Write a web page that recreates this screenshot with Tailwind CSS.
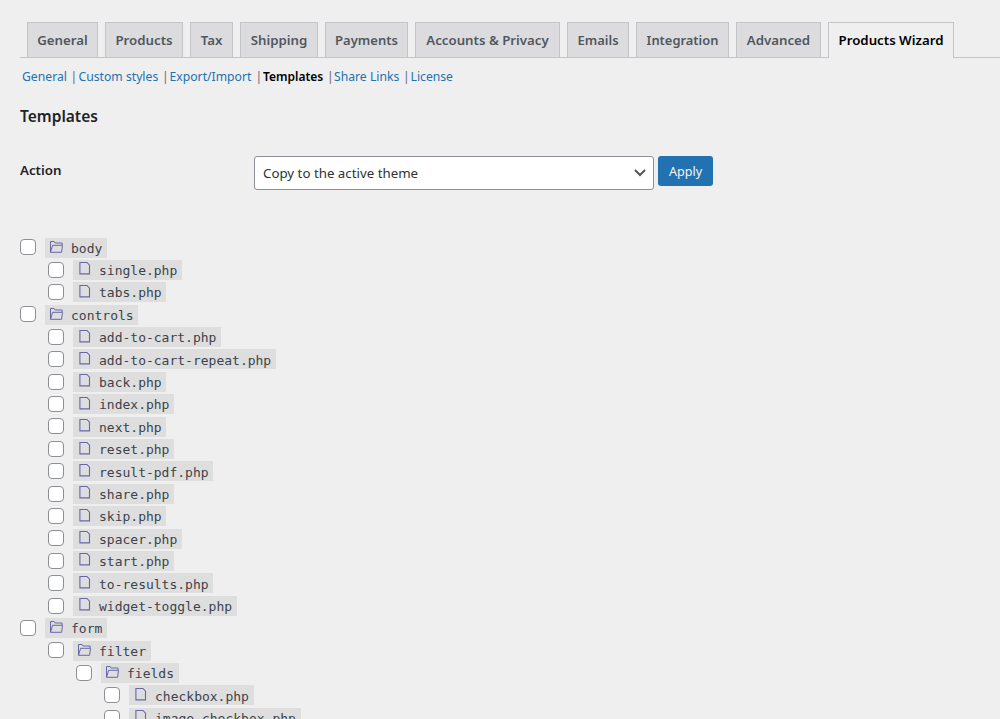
<!DOCTYPE html>
<html lang="en">
<head>
<meta charset="utf-8">
<title>Products Wizard – Templates</title>
<script src="https://cdn.jsdelivr.net/npm/@tailwindcss/browser@4"></script>
</head>
<body class="h-[719px] overflow-hidden bg-[#efefef] font-['Noto_Sans',sans-serif] text-[13px] text-[#3c434a]">
<svg class="hidden">
  <symbol id="folder" viewBox="0 0 14 13"><path d="M1.500 12.300V1.500h3.600l1 1.500h7v2M1.500 12.300 3.600 5.300h9.900L12.600 12.300Z" fill="none" stroke="#6767a8" stroke-width="1"/></symbol>
  <symbol id="file" viewBox="0 0 12 14"><path d="M.9 1.500h7.100l2.500 2.700v8.700H.9Z" fill="none" stroke="#6767a8" stroke-width="1.100"/></symbol>
</svg>
<nav class="mt-[22px] ml-5 flex h-9 gap-[7px] border-b border-[#c3c4c7] pl-[7px] text-[13.25px] leading-[35px] font-semibold whitespace-nowrap text-[#50575e]">
  <a class="h-[35px] w-[71px] border border-b-0 border-[#c3c4c7] bg-[#dcdcde] text-center">General</a>
  <a class="h-[35px] w-[78px] border border-b-0 border-[#c3c4c7] bg-[#dcdcde] text-center">Products</a>
  <a class="h-[35px] w-[43px] border border-b-0 border-[#c3c4c7] bg-[#dcdcde] text-center">Tax</a>
  <a class="h-[35px] w-[78px] border border-b-0 border-[#c3c4c7] bg-[#dcdcde] text-center">Shipping</a>
  <a class="h-[35px] w-[83px] border border-b-0 border-[#c3c4c7] bg-[#dcdcde] text-center text-[13px]">Payments</a>
  <a class="h-[35px] w-[145px] border border-b-0 border-[#c3c4c7] bg-[#dcdcde] text-center">Accounts &amp; Privacy</a>
  <a class="h-[35px] w-[62px] border border-b-0 border-[#c3c4c7] bg-[#dcdcde] text-center text-[13px]">Emails</a>
  <a class="h-[35px] w-[93px] border border-b-0 border-[#c3c4c7] bg-[#dcdcde] text-center text-[12.9px]">Integration</a>
  <a class="h-[35px] w-[85px] border border-b-0 border-[#c3c4c7] bg-[#dcdcde] text-center">Advanced</a>
  <a class="h-9 w-[126px] border border-b-0 border-[#c3c4c7] bg-[#efefef] text-center text-black">Products Wizard</a>
</nav>
<div class="ml-[22px] flex h-9 items-center pt-[2px] text-[12.2px] whitespace-nowrap text-[#2271b1]">
  <a class="w-[48.500px]">General</a><span class="w-[8px] text-[#646970]">|</span>
  <a class="w-[83.500px]">Custom styles</a><span class="w-[7.5px] text-[#646970]">|</span>
  <a class="w-[86px]">Export/Import</a><span class="w-[7.5px] text-[#646970]">|</span>
  <a class="w-[64px] text-[12px] font-semibold text-black">Templates</a><span class="w-[7px] text-[#646970]">|</span>
  <a class="w-[69px]">Share Links</a><span class="w-[7.5px] text-[#646970]">|</span>
  <a>License</a>
</div>
<h2 class="mt-[10px] ml-5 h-6 text-[15.5px] leading-6 font-semibold text-[#1d2327]">Templates</h2>
<div class="mt-7 ml-5 flex h-[34px] items-start">
  <div class="w-[234px] pt-[4px] text-[13.3px] leading-5 font-semibold text-[#1d2327]">Action</div>
  <div class="flex h-[34px] w-[400px] items-center justify-between rounded-[3px] border border-[#8c8f94] bg-white pr-[7px] pl-2 text-[13.3px] text-[#2c3338]"><span class="pt-[2px]">Copy to the active theme</span>
    <svg class="h-3 w-3" viewBox="0 0 12 12" fill="none" stroke="#50575e" stroke-width="2"><path d="m1 3 5 5 5-5"/></svg></div>
  <button class="ml-1 h-[30px] w-[55px] rounded-[3px] bg-[#2271b1] pt-[2px] text-[12.6px] text-[#f6f7f7]">Apply</button>
</div>
<div id="tree" class="mt-[47.5px] ml-5"></div>
<script>
const tree = [
  ['body', ['single', 'tabs']],
  ['controls', ['add-to-cart', 'add-to-cart-repeat', 'back', 'index', 'next', 'reset', 'result-pdf', 'share', 'skip', 'spacer', 'start', 'to-results', 'widget-toggle']],
  ['form', [['filter', [['fields', ['checkbox', 'image-checkbox']]]]]]
];
const row = (icon, name) => `<div class="flex h-[22.4px] items-start">
  <span class="mt-[1.8px] mr-[9px] h-4 w-4 shrink-0 rounded-[4px] border border-[#8c8f94] bg-white"></span>
  <code class="flex h-5 items-start bg-[#dedede] pr-[4.7px] pl-1 font-['DejaVu_Sans_Mono',monospace] text-[13px] leading-[21px] whitespace-nowrap">${icon}<span class="mt-[.2px]">${name}</span></code></div>`;
const folder = '<svg class="mt-[2px] mr-[8px] h-[13px] w-[14px]"><use href="#folder"/></svg>';
const file = '<svg class="mt-[1.500px] mr-[8px] ml-[2px] h-[14px] w-[12px]"><use href="#file"/></svg>';
const list = items => items.map(i => Array.isArray(i)
  ? row(folder, i[0]) + `<div class="pl-7">${list(i[1])}</div>`
  : row(file, i + '.php')).join('');
document.getElementById('tree').innerHTML = list(tree);
</script>
</body>
</html>
